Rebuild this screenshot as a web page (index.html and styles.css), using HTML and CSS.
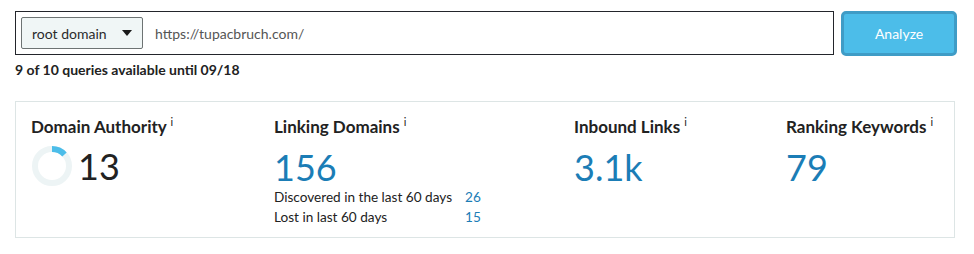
FILE: index.html
```html
<!DOCTYPE html>
<html lang="en">
<head>
    <meta charset="UTF-8">
    <title>Link Explorer</title>
    <link rel="stylesheet" href="styles.css">
</head>
<body>
    <div class="search-row">
        <div class="search-box">
            <div class="scope-select">
                <span>root domain</span>
                <span class="caret"></span>
            </div>
            <span class="url">https://tupacbruch.com/</span>
        </div>
        <button class="analyze">Analyze</button>
    </div>
    <p class="quota">9 of 10 queries available until 09/18</p>

    <div class="card">
        <div class="metric">
            <h3>Domain Authority <sup>i</sup></h3>
            <div class="value-row">
                <svg class="ring" width="42" height="42" viewBox="0 0 42 42">
                    <circle cx="21" cy="21" r="17" fill="none" stroke="#edf4f5" stroke-width="6"/>
                    <circle cx="21" cy="21" r="17" fill="none" stroke="#4cbde9" stroke-width="6"
                            stroke-dasharray="13.9 120" transform="rotate(-90 21 21)"/>
                </svg>
                <span class="big dark">13</span>
            </div>
        </div>
        <div class="metric">
            <h3>Linking Domains <sup>i</sup></h3>
            <span class="big">156</span>
            <div class="sub"><span>Discovered in the last 60 days</span><span class="num">26</span></div>
            <div class="sub"><span>Lost in last 60 days</span><span class="num">15</span></div>
        </div>
        <div class="metric">
            <h3>Inbound Links <sup>i</sup></h3>
            <span class="big">3.1k</span>
        </div>
        <div class="metric">
            <h3>Ranking Keywords <sup>i</sup></h3>
            <span class="big">79</span>
        </div>
    </div>
</body>
</html>
```

FILE: styles.css
```css
body {
    margin: 0;
    padding: 11px 17px 0 15px;
    font-family: Lato, "Open Sans", sans-serif;
    color: #222;
    background: #fff;
}
.search-row {
    display: flex;
    gap: 7px;
}
.search-box {
    width: 820px;
    height: 44px;
    box-sizing: border-box;
    border: 1px solid #23252b;
    display: flex;
    align-items: center;
    padding-left: 5px;
}
.scope-select {
    width: 122px;
    height: 32px;
    box-sizing: border-box;
    border: 1px solid #6d7373;
    border-radius: 2px;
    background: #f0f6f6;
    display: flex;
    align-items: center;
    padding-left: 10px;
    font-size: 14px;
    color: #2b2b2b;
}
.caret {
    width: 0;
    height: 0;
    margin-left: 15px;
    border-left: 5px solid transparent;
    border-right: 5px solid transparent;
    border-top: 6px solid #1a1a1a;
}
.url {
    margin-left: 12px;
    font-size: 14px;
    color: #555;
}
.analyze {
    width: 116px;
    height: 45px;
    border: 3px solid #3f9cc6;
    border-radius: 5px;
    background: #4cbde9;
    color: #fff;
    font-family: Lato, sans-serif;
    font-size: 14px;
    cursor: pointer;
}
.quota {
    margin: 5px 0 0;
    font-size: 14px;
    line-height: 18px;
    font-weight: bold;
    color: #222;
}
.card {
    margin-top: 22px;
    width: 940px;
    height: 137px;
    box-sizing: border-box;
    border: 1px solid #dde5e5;
    display: grid;
    grid-template-columns: 243px 300px 212px 1fr;
    padding: 14px 0 0 15px;
}
.metric h3 {
    margin: 0;
    font-size: 17px;
    line-height: 22px;
    font-weight: bold;
    color: #222;
}
.metric sup {
    font-size: 11px;
    line-height: 0;
    font-weight: normal;
    color: #222;
}
.value-row {
    display: flex;
    align-items: center;
    gap: 5px;
    margin-top: 6px;
}
.metric > .big {
    margin-top: 7px;
}
.big {
    display: block;
    font-size: 36px;
    line-height: 44px;
    color: #1b7db6;
}
.big.dark {
    color: #222;
}
.sub {
    display: flex;
    font-size: 13.6px;
    line-height: 20px;
}
.sub:first-of-type {
    margin-top: -2px;
}
.sub span:first-child {
    width: 191px;
}
.num {
    color: #1b7db6;
}
```
